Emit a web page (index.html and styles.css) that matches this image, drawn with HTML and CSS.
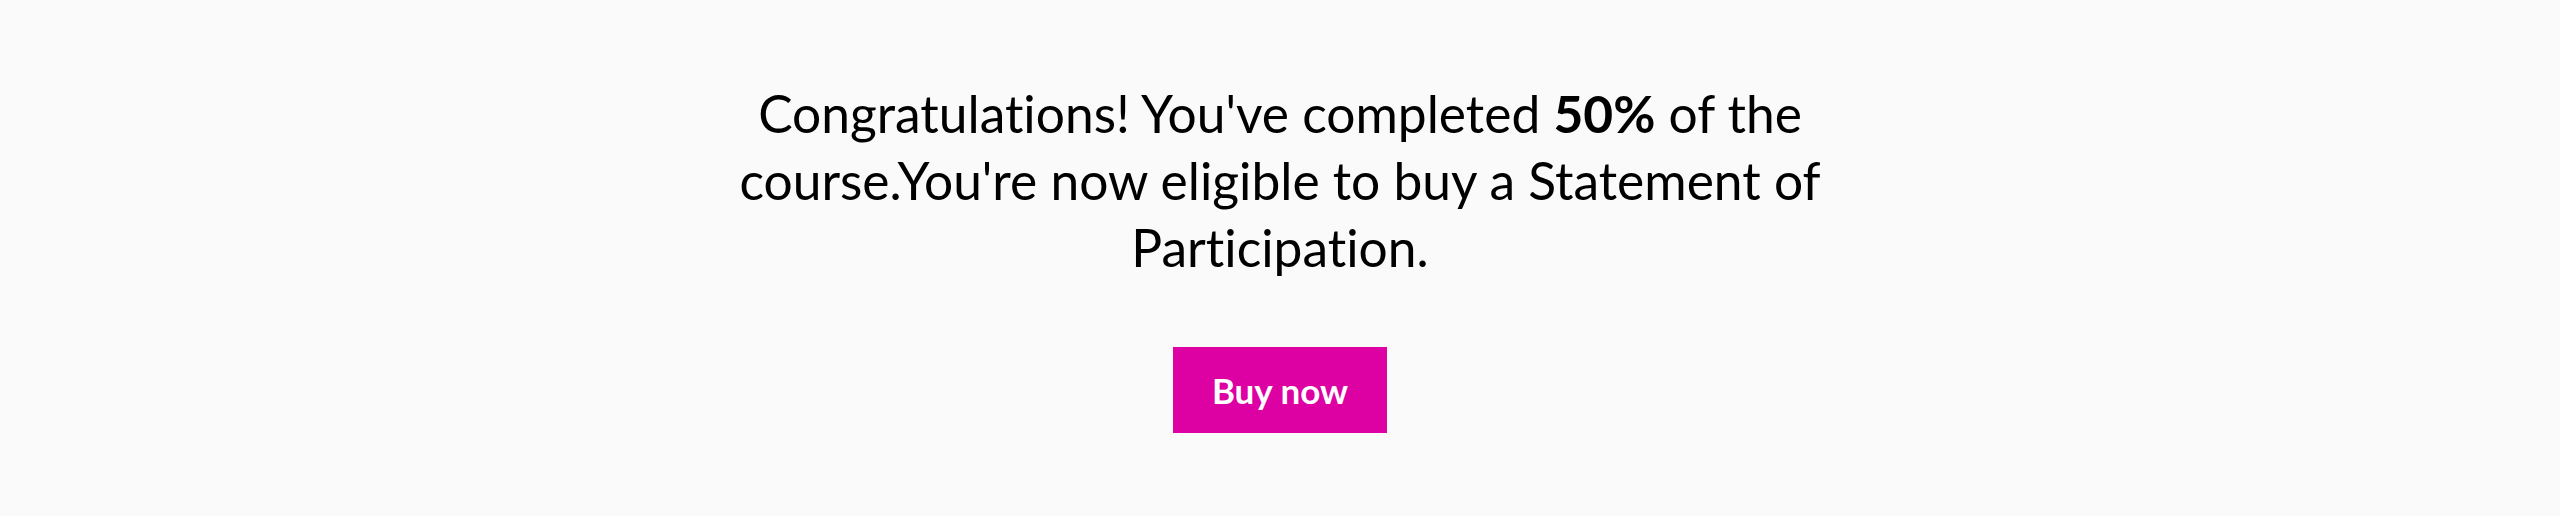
FILE: index.html
```html
<!DOCTYPE html>
<html lang="en">
<head>
<meta charset="utf-8">
<title>Statement of Participation</title>
<link rel="stylesheet" href="styles.css">
</head>
<body>
<main class="banner">
  <p class="message">Congratulations! You've completed <strong>50%</strong> of the course.You're now eligible to buy a Statement of Participation.</p>
  <a class="buy-button" href="#">Buy now</a>
</main>
</body>
</html>
```
FILE: styles.css
```css
html, body {
  margin: 0;
  padding: 0;
  background: #fafafa;
}
body {
  font-family: "Lato", "Noto Sans", sans-serif;
  color: #000;
  font-variant-ligatures: none;
  font-feature-settings: "liga" 0, "clig" 0;
}
.banner {
  display: flex;
  flex-direction: column;
  align-items: center;
  padding-top: 80px;
}
.message {
  margin: 0;
  max-width: 1110px;
  font-size: 51.5px;
  line-height: 67px;
  text-align: center;
}
.message strong {
  font-weight: 700;
}
.buy-button {
  margin-top: 66px;
  display: flex;
  align-items: center;
  justify-content: center;
  width: 214px;
  height: 86px;
  background: #dd00a2;
  color: #fff;
  font-size: 35px;
  font-weight: 700;
  text-decoration: none;
}
```
